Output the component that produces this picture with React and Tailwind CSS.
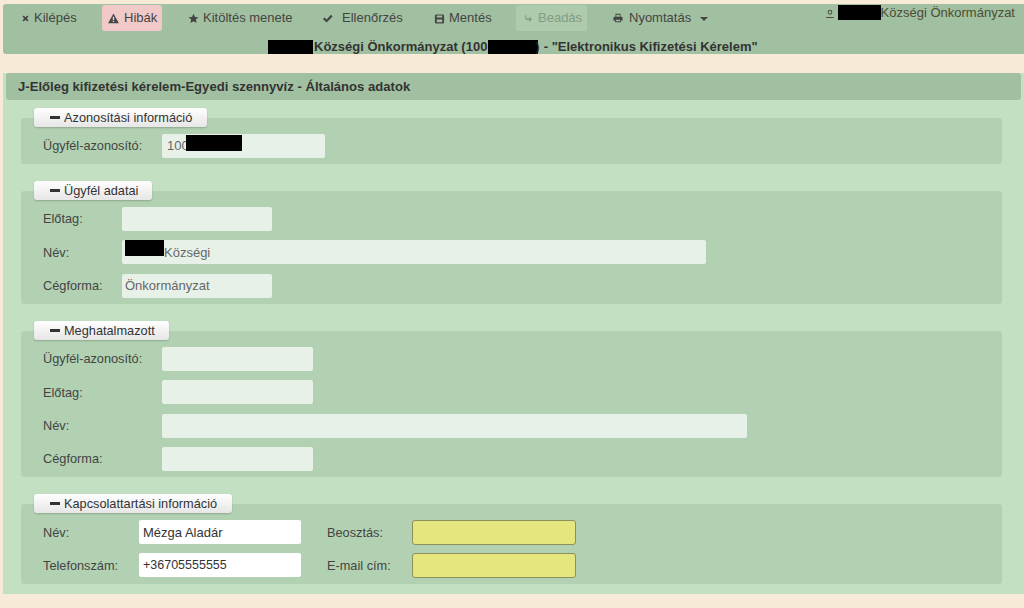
import React from 'react';

const Redact = ({ className }) => <span className={`inline-block bg-black ${className}`} />;

const icons = {
  x: <path d="M2 3.600 3.600 2 6 4.400 8.400 2 10 3.600 7.600 6 10 8.400 8.400 10 6 7.600 3.600 10 2 8.400 4.400 6z" fill="currentColor" />,
  warn: <path fillRule="evenodd" d="M6 .6 11.900 11.200H.1zM5.200 4.200v3.600h1.600V4.200zm0 4.400v1.300h1.600V8.600z" fill="currentColor" />,
  star: <path d="M6 .8l1.600 3.500 3.800.4-2.900 2.500.9 3.800L6 9 2.600 11l.9-3.800L.6 4.700l3.800-.4z" fill="currentColor" />,
  check: <path d="M1 6.500 2.800 4.800 5 7 9.800 2 11.500 3.800 5 10.300z" fill="currentColor" />,
  save: <path fillRule="evenodd" d="M2 1.500h8l1 1v8l-1 1H2l-1-1v-8zm1 1.200v2.300h6V2.700zM3 7v3.200h6V7z" fill="currentColor" />,
  share: <path d="M1.500 1.500h1.500v3.500L4 6h3V3.500L11 7 7 10.500V8H3.500L1.500 6z" fill="currentColor" />,
  print: <path fillRule="evenodd" d="M3 1h6v3.500h1.500l1 1V9H9.500v2h-7V9H.5V5.500l1-1H3zm1 1v2.500h4V2zm-.5 6v2h5V8z" fill="currentColor" />,
  user: <path fillRule="evenodd" d="M6 .8a2.800 2.800 0 0 1 2.800 2.800C8.800 5.200 7.600 6.800 6 6.800S3.200 5.200 3.200 3.600A2.800 2.800 0 0 1 6 .8zM6 2A1.600 1.600 0 0 0 4.400 3.600C4.400 4.600 5.200 5.700 6 5.700s1.600-1.100 1.600-2.100A1.600 1.600 0 0 0 6 2zM1.500 9.500h9v1.300h-9z" fill="currentColor" />,
};

const Icon = ({ name, className = 'h-[11px] w-[11px]' }) => (
  <svg viewBox="0 0 12 12" className={`shrink-0 ${className}`}>
    {icons[name]}
  </svg>
);

const ToolButton = ({ icon, label, className, iconClass }) => (
  <div className={`flex h-[26px] items-center rounded-[3px] ${className}`}>
    <Icon name={icon} className={iconClass} />
    <span>{label}</span>
  </div>
);

const Legend = ({ children, width }) => (
  <div className={`-mt-[10px] ml-[13px] flex h-[19px] items-center rounded-[3px] bg-gradient-to-b from-white to-[#e6e6e6] pl-[16px] text-[12.750px] text-[#333] shadow-[0_1px_2px_rgba(0,0,0,0.2)] ${width}`}>
    <span className="mr-[4px] h-[3px] w-[10px] bg-[#333]" />
    {children}
  </div>
);

const Fieldset = ({ legend, legendWidth, gap = 'gap-[9.400px]', children }) => (
  <section className="rounded-[3px] bg-[#b2d1b2]">
    <Legend width={legendWidth}>{legend}</Legend>
    <div className={`flex flex-col pb-[6px] pl-[22px] pt-[7px] ${gap}`}>{children}</div>
  </section>
);

const Row = ({ label, labelWidth, inputWidth, children }) => (
  <div className="flex items-center">
    <div className={`text-[12.750px] text-[#444] ${labelWidth}`}>{label}</div>
    <div className={`flex h-[24px] items-center rounded-[2px] bg-[#e8f1e8] px-[5px] text-[13px] text-[#666] ${inputWidth}`}>{children}</div>
  </div>
);

const ContactRow = ({ label, value, label2, valueClass }) => (
  <div className="flex items-center">
    <div className="w-[96px] text-[12.750px] text-[#444]">{label}</div>
    <div className={`flex h-[24px] w-[162px] items-center rounded-[2px] bg-white px-[4px] text-[#333] ${valueClass}`}>{value}</div>
    <div className="ml-[26px] w-[85px] text-[12.750px] text-[#444]">{label2}</div>
    <div className="h-[25px] w-[164px] rounded-[3px] border border-[#8f8f5c] bg-[#e6e67f]" />
  </div>
);

export default function App() {
  return (
    <div className="h-[608px] w-[1024px] overflow-hidden bg-[#f7ebd7] pl-[3px] pt-[4px] font-['Liberation_Sans',Arial,sans-serif]">
      <header className="h-[50px] rounded-l-[3px] bg-[#a1c0a1] text-[13px] text-[#444]">
        <div className="flex justify-between">
          <nav className="flex pt-[1px]">
            <ToolButton icon="x" label="Kilépés" className="ml-[12px] w-[75px] gap-[4px] pl-[6px]" iconClass="h-[9px] w-[9px]" />
            <ToolButton icon="warn" label="Hibák" className="ml-[12px] w-[60px] gap-[5px] bg-[#f2c9c9] pl-[6px]" iconClass="h-[11px] w-[11px]" />
            <ToolButton icon="star" label="Kitöltés menete" className="ml-[18px] w-[116px] gap-[4px] pl-[8px]" iconClass="h-[11px] w-[11px]" />
            <ToolButton icon="check" label="Ellenőrzés" className="ml-[18px] w-[90px] gap-[9px] pl-[8px]" iconClass="h-[11px] w-[11px]" />
            <ToolButton icon="save" label="Mentés" className="ml-[22px] w-[70px] gap-[4px] pl-[8px]" iconClass="h-[11px] w-[11px]" />
            <ToolButton icon="share" label="Beadás" className="ml-[20px] w-[71px] gap-[5px] bg-[#aecbae] pl-[8px] text-[#849b84]" iconClass="h-[9px] w-[9px]" />
            <ToolButton icon="print" label="Nyomtatás" className="ml-[18px] w-[90px] gap-[6px] pl-[8px]" iconClass="h-[10px] w-[10px]" />
            <span className="ml-[5px] mt-[12px] h-0 w-0 border-x-[4px] border-t-[4px] border-x-transparent border-t-[#444]" />
          </nav>
          <div className="flex items-start pr-[9px] pt-[1px] text-[#4d4d33]">
            <Icon name="user" className="mr-[3px] mt-[4px] h-[10px] w-[10px]" />
            <Redact className="h-[15px] w-[43px]" />
            <span className="leading-[15px]">Községi Önkormányzat</span>
          </div>
        </div>
        <div className="mt-[8px] flex items-center pl-[265px] font-bold leading-[15px] text-[#333]">
          <Redact className="h-[14px] w-[45px]" />
          <span className="ml-[1px]">Községi Önkormányzat (100</span>
          <Redact className="ml-[1px] h-[14px] w-[50px]" />
          <span className="-ml-[3px] font-normal">)</span>
          <span className="ml-[4px]">- "Elektronikus Kifizetési Kérelem"</span>
        </div>
      </header>

      <main className="mt-[19px] h-[521px] bg-[#c3e0c3]">
        <h1 className="mx-[3px] mb-[18px] flex h-[27px] items-center rounded-[3px] bg-[#a1c0a1] pl-[12px] text-[13.100px] font-bold text-[#333]">
          J-Előleg kifizetési kérelem-Egyedi szennyvíz - Általános adatok
        </h1>
        <div className="mx-[18px] flex w-[981px] flex-col gap-[27px]">
          <Fieldset legend="Azonosítási információ" legendWidth="w-[173px]">
            <Row label="Ügyfél-azonosító:" labelWidth="w-[119px]" inputWidth="w-[163px]">
              100<Redact className="-ml-[3px] -mt-[6px] h-[16px] w-[56px]" />
            </Row>
          </Fieldset>

          <Fieldset legend="Ügyfél adatai" legendWidth="w-[118px]">
            <Row label="Előtag:" labelWidth="w-[79px]" inputWidth="w-[150px]" />
            <Row label="Név:" labelWidth="w-[79px]" inputWidth="w-[584px] pl-[3px]">
              <Redact className="-mt-[8px] h-[16px] w-[39px]" />Községi
            </Row>
            <Row label="Cégforma:" labelWidth="w-[79px]" inputWidth="w-[150px] pl-[3px]">Önkormányzat</Row>
          </Fieldset>

          <Fieldset legend="Meghatalmazott" legendWidth="w-[135px]">
            <Row label="Ügyfél-azonosító:" labelWidth="w-[119px]" inputWidth="w-[151px]" />
            <Row label="Előtag:" labelWidth="w-[119px]" inputWidth="w-[151px]" />
            <Row label="Név:" labelWidth="w-[119px]" inputWidth="w-[585px]" />
            <Row label="Cégforma:" labelWidth="w-[119px]" inputWidth="w-[151px]" />
          </Fieldset>

          <Fieldset legend="Kapcsolattartási információ" legendWidth="w-[198px]" gap="gap-[8px]">
            <ContactRow label="Név:" value="Mézga Aladár" label2="Beosztás:" valueClass="text-[13px]" />
            <ContactRow label="Telefonszám:" value="+36705555555" label2="E-mail cím:" valueClass="text-[12.500px]" />
          </Fieldset>
        </div>
      </main>
    </div>
  );
}
